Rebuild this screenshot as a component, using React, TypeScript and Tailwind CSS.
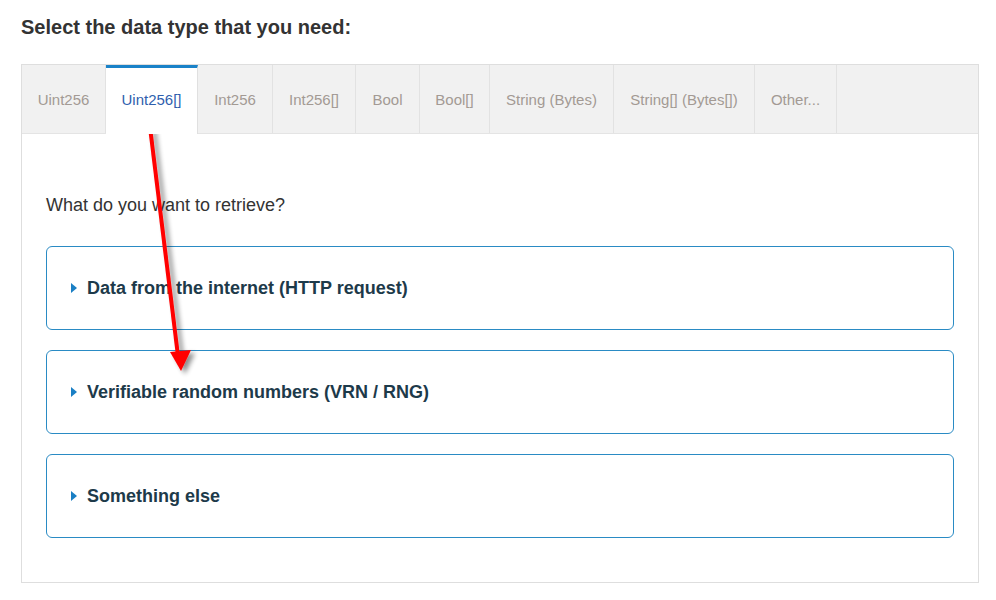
import React from "react";

const tabs = [
  { label: "Uint256", w: 84 },
  { label: "Uint256[]", w: 92, active: true },
  { label: "Int256", w: 75 },
  { label: "Int256[]", w: 83 },
  { label: "Bool", w: 64 },
  { label: "Bool[]", w: 70 },
  { label: "String (Bytes)", w: 124 },
  { label: "String[] (Bytes[])", w: 141 },
  { label: "Other...", w: 82 },
];

const items = [
  "Data from the internet (HTTP request)",
  "Verifiable random numbers (VRN / RNG)",
  "Something else",
];

export default function App() {
  return (
    <div
      className="relative w-[996px] h-[600px] bg-white overflow-hidden"
      style={{ fontFamily: '"Liberation Sans", Arial, sans-serif' }}
    >
      <div className="pl-[21px] pt-[16px] pr-[17px]">
        <h1 className="text-[20px] leading-[23px] font-bold text-[#333333]">
          Select the data type that you need:
        </h1>
        <div className="mt-[25px] border border-[#dedede] h-[519px]">
          <div className="flex bg-[#f1f1f1] h-[69px] border-b border-[#e4e4e4]">
            {tabs.map((t) =>
              t.active ? (
                <div
                  key={t.label}
                  className="h-[69px] bg-white border-t-[3px] border-[#1a82c8] border-r border-r-[#e0e0e0] flex items-center justify-center text-[15px] text-[#2f5fae] -mb-px relative z-10 pb-[2px]"
                  style={{ width: t.w }}
                >
                  {t.label}
                </div>
              ) : (
                <div
                  key={t.label}
                  className="h-full border-r border-[#e2e2e2] flex items-center justify-center text-[15px] text-[#a39a94] pt-[2px]"
                  style={{ width: t.w }}
                >
                  {t.label}
                </div>
              )
            )}
          </div>
          <div className="px-[24px] pt-[61px]">
            <p className="text-[18px] leading-[21px] text-[#333333]">
              What do you want to retrieve?
            </p>
            <div className="mt-[30px] flex flex-col gap-[20px]">
              {items.map((it) => (
                <div
                  key={it}
                  className="h-[84px] border border-[#2a8bc4] rounded-[6px] flex items-center pl-[24px]"
                >
                  <svg width="6" height="10" viewBox="0 0 6 10" className="mr-[10px]">
                    <path d="M0 0 L6 5 L0 10 Z" fill="#1a7fc4" />
                  </svg>
                  <span className="text-[18px] font-bold text-[#1d3a4a]">{it}</span>
                </div>
              ))}
            </div>
          </div>
        </div>
      </div>
      <svg
        className="absolute left-0 top-0 pointer-events-none"
        width="996"
        height="600"
        viewBox="0 0 996 600"
      >
        <defs>
          <filter id="sh" x="-50%" y="-50%" width="200%" height="200%">
            <feGaussianBlur in="SourceAlpha" stdDeviation="2.5" />
            <feOffset dx="4" dy="3" result="b" />
            <feComponentTransfer>
              <feFuncA type="linear" slope="0.45" />
            </feComponentTransfer>
            <feMerge>
              <feMergeNode />
              <feMergeNode in="SourceGraphic" />
            </feMerge>
          </filter>
        </defs>
        <g filter="url(#sh)">
          <line x1="150" y1="127" x2="178" y2="356" stroke="#ff0000" strokeWidth="4" />
          <path d="M170 352 L191 350 L181 371 Z" fill="#ff0000" />
        </g>
      </svg>
    </div>
  );
}
